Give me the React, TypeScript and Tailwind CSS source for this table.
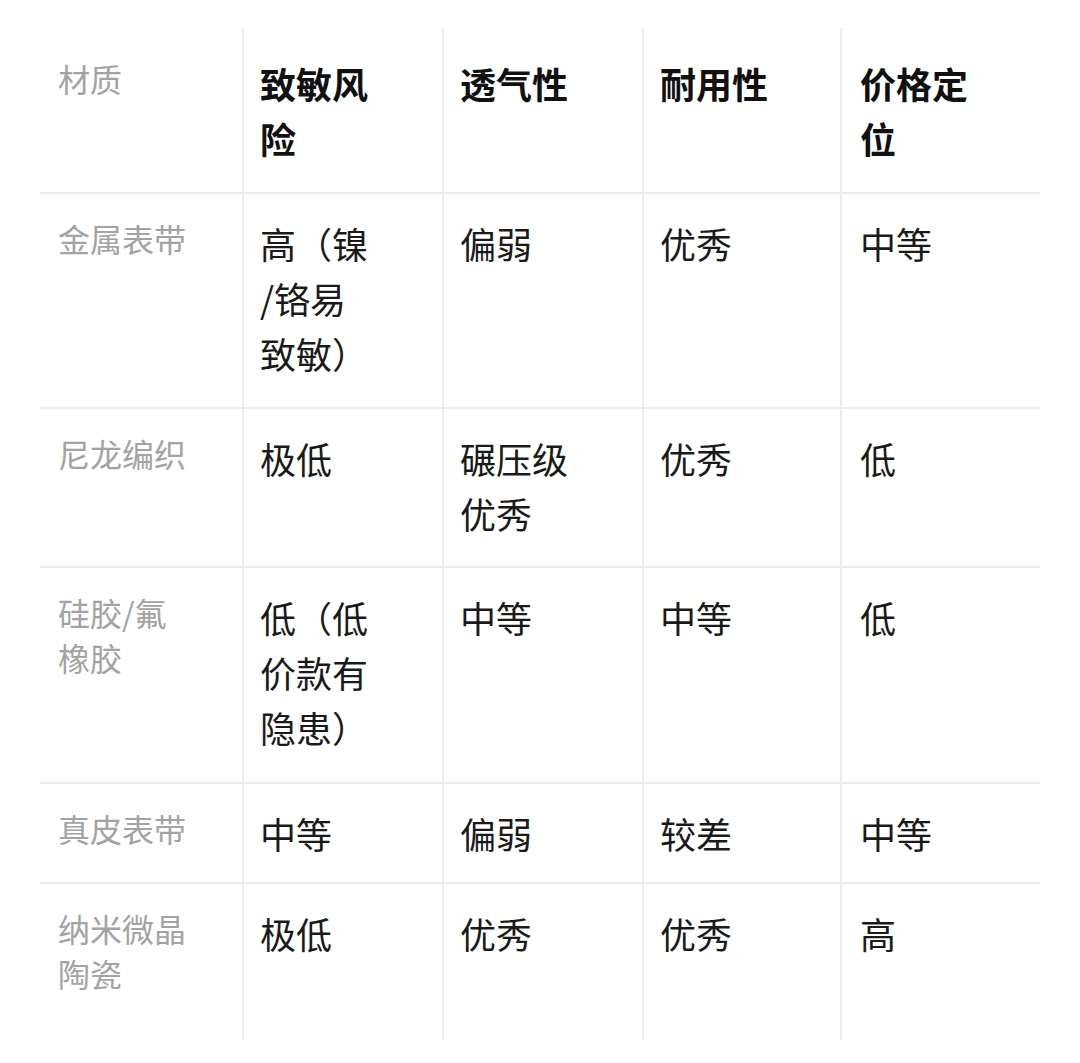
const font = { fontFamily: '"Noto Sans CJK SC", "Noto Sans", sans-serif' }

type Row = {
  cells: string[][]
  pad: string
}

const header = ['材质', '致敏风\n险', '透气性', '耐用性', '价格定\n位']

const rows: Row[] = [
  { cells: [['金属表带'], ['高（镍', '/铬易', '致敏）'], ['偏弱'], ['优秀'], ['中等']], pad: 'pt-[22px] pb-[26px]' },
  { cells: [['尼龙编织'], ['极低'], ['碾压级', '优秀'], ['优秀'], ['低']], pad: 'pt-[22px] pb-[25px]' },
  { cells: [['硅胶/氟', '橡胶'], ['低（低', '价款有', '隐患）'], ['中等'], ['中等'], ['低']], pad: 'pt-[22px] pb-[27px]' },
  { cells: [['真皮表带'], ['中等'], ['偏弱'], ['较差'], ['中等']], pad: 'pt-[22px] pb-[21px]' },
  { cells: [['纳米微晶', '陶瓷'], ['极低'], ['优秀'], ['优秀'], ['高']], pad: 'pt-[22px] pb-[44px]' },
]

const cols = 'grid grid-cols-[202px_200px_200px_198px_200px]'

export default function App() {
  return (
    <div className="min-h-screen bg-white pt-[28px] px-[40px]" style={font}>
      <div className="w-[1000px]">
        {/* Header */}
        <div className={`${cols} border-b-2 border-[#ececec]`}>
          {header.map((h, i) =>
            i === 0 ? (
              <div key={i} className="pl-[18px] pt-[28px] pb-[26px] text-[32px] leading-[45px] text-[#a3a3a3]">
                {h}
              </div>
            ) : (
              <div
                key={i}
                className={`border-l-2 border-[#ececec] pt-[28px] pb-[26px] text-[36px] leading-[55px] font-bold text-[#111] ${i === 4 ? 'pl-[18px]' : 'pl-[16px]'}`}
              >
                {h.split('\n').map((line, j) => (
                  <div key={j}>{line}</div>
                ))}
              </div>
            )
          )}
        </div>

        {/* Body */}
        {rows.map((row, r) => (
          <div key={r} className={`${cols} ${r < rows.length - 1 ? 'border-b-2 border-[#ececec]' : ''}`}>
            {row.cells.map((lines, i) =>
              i === 0 ? (
                <div key={i} className={`pl-[18px] ${row.pad} text-[32px] leading-[45px] text-[#a3a3a3]`}>
                  {lines.map((line, j) => (
                    <div key={j}>{line}</div>
                  ))}
                </div>
              ) : (
                <div
                  key={i}
                  className={`border-l-2 border-[#ececec] ${row.pad} text-[36px] leading-[55px] text-[#1a1a1a] ${i === 4 ? 'pl-[18px]' : 'pl-[16px]'}`}
                >
                  {lines.map((line, j) => (
                    <div key={j}>{line}</div>
                  ))}
                </div>
              )
            )}
          </div>
        ))}
      </div>
    </div>
  )
}
